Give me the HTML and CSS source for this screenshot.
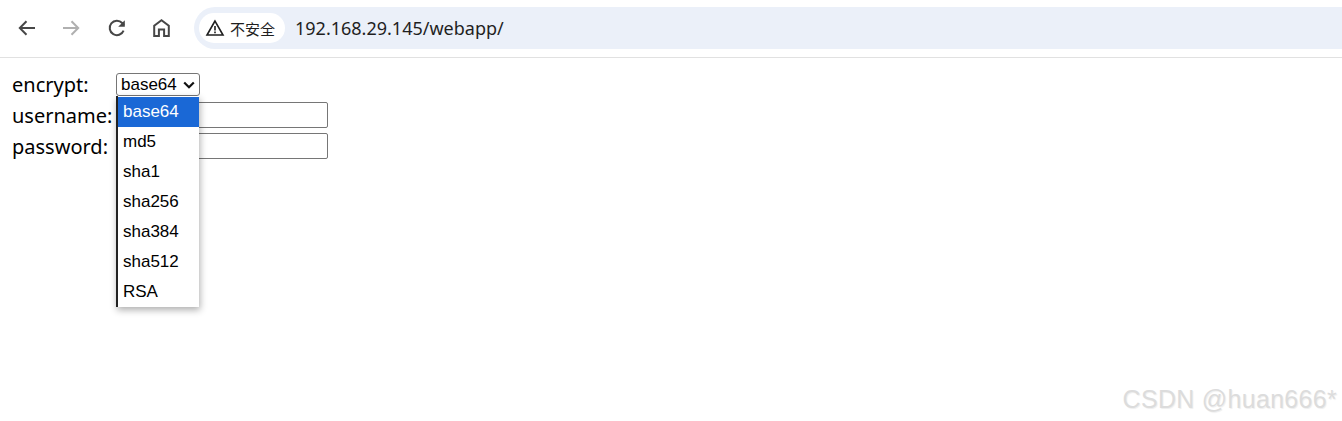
FILE: index.html
```html
<!DOCTYPE html>
<html lang="zh">
<head>
<meta charset="utf-8">
<title>webapp</title>
<link rel="stylesheet" href="styles.css">
</head>
<body>
<header class="toolbar">
  <nav class="nav-icons">
    <svg class="icon" viewBox="0 0 24 24"><path class="st" d="M20 12H5M11.5 5.2 4.8 12l6.7 6.8"/></svg>
    <svg class="icon dim" viewBox="0 0 24 24"><path class="st" d="M4 12h15M12.5 5.2l6.7 6.8-6.7 6.8"/></svg>
    <svg class="icon reload" viewBox="0 0 24 24"><path class="st" d="M18.6 14.6A7.2 7.2 0 1 1 17.2 7L19 9"/><path class="fl" d="M19.8 4.2v6.6h-6.6z"/></svg>
    <svg class="icon" viewBox="0 0 24 24"><path class="st" d="M5.2 20V9.8L12.5 4.2l7.3 5.6V20h-4.7v-6.5h-5.2V20z"/></svg>
  </nav>
  <div class="omnibox">
    <div class="chip">
      <svg class="warn" viewBox="0 0 20 20"><path class="warn-line" d="M10 3 2 17h16z"/><path class="warn-mark" d="M9.2 8h1.6v4.6H9.2zM9.2 13.6h1.6v1.6H9.2z"/></svg>
      <span class="chip-text">不安全</span>
    </div>
    <span class="url">192.168.29.145/webapp/</span>
  </div>
</header>
<main class="page">
  <div class="row row-first">
    <span class="label">encrypt:</span>
    <div class="select">base64
      <svg class="chev" viewBox="0 0 12 8"><path d="M1.2 1.5 6 6.2l4.8-4.7"/></svg>
    </div>
  </div>
  <div class="row row-second"><span class="label">username:</span><div class="input"></div></div>
  <div class="row row-third"><span class="label">password:</span><div class="input"></div></div>
  <ul class="menu">
    <li class="selected">base64</li>
    <li>md5</li>
    <li>sha1</li>
    <li>sha256</li>
    <li>sha384</li>
    <li>sha512</li>
    <li>RSA</li>
  </ul>
</main>
<div class="mark">CSDN @huan666*</div>
</body>
</html>
```
FILE: styles.css
```css
html, body { margin: 0; padding: 0; background: #fff; height: 421px; overflow: hidden; }
body { position: relative; font-family: "Liberation Sans", Arial, sans-serif; color: #000; }

.toolbar { height: 57px; box-sizing: content-box; border-bottom: 1px solid #e1e1e1; display: flex; align-items: flex-start; background: #fff; }
.nav-icons { display: flex; gap: 20px; padding: 16px 0 0 15px; width: 194px; box-sizing: border-box; flex: none; }
.icon { width: 24px; height: 24px; display: block; }
.reload { margin-left: 2px; }
.st { fill: none; stroke: #474747; stroke-width: 2; }
.fl { fill: #474747; }
.dim .st { stroke: #b0b0b0; }

.omnibox { flex: 1; height: 42px; margin-top: 7px; background: #ebf0f9; border-radius: 21px 0 0 21px; display: flex; align-items: center; padding-left: 5px; }
.chip { height: 30px; width: 86px; background: #fff; border-radius: 15px; display: flex; align-items: center; padding-left: 6px; box-sizing: border-box; }
.warn { width: 20px; height: 20px; flex: none; }
.warn-line { fill: none; stroke: #1f1f1f; stroke-width: 1.6; }
.warn-mark { fill: #1f1f1f; }
.chip-text { font-family: "Noto Sans CJK SC", sans-serif; font-size: 15px; color: #1f1f1f; margin-left: 5px; }
.url { font-family: "Noto Sans", sans-serif; font-size: 18px; color: #1f1f1f; margin-left: 10px; }

.page { position: relative; padding: 15px 0 0 12px; }
.row { display: flex; align-items: flex-start; font-family: "Noto Sans", sans-serif; font-size: 20px; }
.label { display: block; width: 104px; line-height: 24px; }
.row-first { height: 31px; }
.row-second { height: 31px; }
.row-third { height: 31px; }
.select { box-sizing: border-box; width: 84px; height: 23px; border: 1px solid #767676; border-radius: 3px; font-family: "Liberation Sans", sans-serif; font-size: 17px; line-height: 21px; padding-left: 4px; display: flex; justify-content: space-between; align-items: center; background: #fff; }
.chev { width: 12px; height: 8px; margin-right: 4px; fill: none; stroke: #111; stroke-width: 2.2; }
.input { box-sizing: border-box; width: 212px; height: 26px; margin-top: -2px; border: 1px solid #767676; border-radius: 2px; background: #fff; }

.menu { position: absolute; left: 116px; top: 38px; width: 83px; box-sizing: border-box; margin: 0; padding: 1px 0 0; list-style: none; background: #fff; border-left: 2px solid #222; box-shadow: 1px 3px 7px rgba(0,0,0,.32); font-size: 17px; }
.menu li { height: 30px; line-height: 30px; padding-left: 5px; }
.menu .selected { background: #1a68d6; color: #fff; }

.mark { position: absolute; right: 5px; top: 384px; font-size: 25px; letter-spacing: .3px; line-height: 30px; color: #dcdcdc; text-shadow: 1px 1px 1px #eee; }
```
